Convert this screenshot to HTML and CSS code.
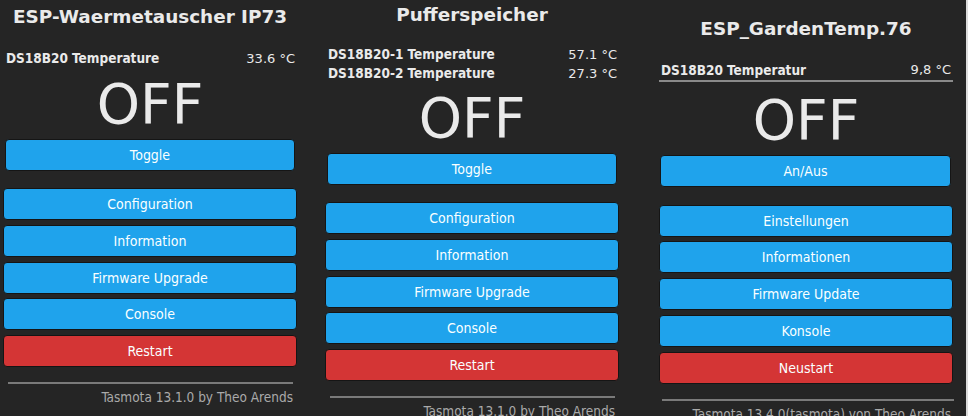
FILE: index.html
```html
<!DOCTYPE html>
<html lang="de">
<head>
<meta charset="utf-8">
<title>Tasmota</title>
<link rel="stylesheet" href="styles.css">
</head>
<body>
<div class="screens">
  <section class="panel p1">
    <h2 class="title">ESP-Waermetauscher IP73</h2>
    <div class="sensors">
      <div class="row"><span class="lbl">DS18B20 Temperature</span><span class="val">33.6 °C</span></div>
    </div>
    <div class="state">OFF</div>
    <div class="btn toggle">Toggle</div>
    <div class="menu">
      <div class="btn">Configuration</div>
      <div class="btn">Information</div>
      <div class="btn">Firmware Upgrade</div>
      <div class="btn">Console</div>
      <div class="btn red">Restart</div>
    </div>
    <div class="rule"></div>
    <div class="foot">Tasmota 13.1.0 by Theo Arends</div>
  </section>
  <section class="panel p2">
    <h2 class="title">Pufferspeicher</h2>
    <div class="sensors">
      <div class="row"><span class="lbl">DS18B20-1 Temperature</span><span class="val">57.1 °C</span></div>
      <div class="row"><span class="lbl">DS18B20-2 Temperature</span><span class="val">27.3 °C</span></div>
    </div>
    <div class="state">OFF</div>
    <div class="btn toggle">Toggle</div>
    <div class="menu">
      <div class="btn">Configuration</div>
      <div class="btn">Information</div>
      <div class="btn">Firmware Upgrade</div>
      <div class="btn">Console</div>
      <div class="btn red">Restart</div>
    </div>
    <div class="rule"></div>
    <div class="foot">Tasmota 13.1.0 by Theo Arends</div>
  </section>
  <section class="panel p3">
    <h2 class="title">ESP_GardenTemp.76</h2>
    <div class="sensors lined">
      <div class="row"><span class="lbl">DS18B20 Temperatur</span><span class="val">9,8 °C</span></div>
    </div>
    <div class="state">OFF</div>
    <div class="btn toggle">An/Aus</div>
    <div class="menu">
      <div class="btn">Einstellungen</div>
      <div class="btn">Informationen</div>
      <div class="btn">Firmware Update</div>
      <div class="btn">Konsole</div>
      <div class="btn red">Neustart</div>
    </div>
    <div class="rule"></div>
    <div class="foot">Tasmota 13.4.0(tasmota) von Theo Arends</div>
  </section>
  <div class="edge"></div>
</div>
</body>
</html>
```
FILE: styles.css
```css
html, body {
  margin: 0;
  padding: 0;
  background: #252525;
  overflow: hidden;
}
body {
  width: 968px;
  height: 416px;
  font-family: "DejaVu Sans", Verdana, sans-serif;
  color: #eaeaea;
}
.screens {
  display: flex;
  height: 416px;
}
.panel {
  display: flex;
  flex-direction: column;
  box-sizing: border-box;
  height: 416px;
  overflow: hidden;
}
.p1 { width: 320px; padding: 5px 0 0 3px; }
.p2 { width: 330px; padding: 3px 0 0 5px; }
.p3 { width: 316px; padding: 17px 0 0 9px; }
.edge { width: 2px; background: #dcdcdc; }

.panel > * { width: 294px; flex: none; }

.title {
  margin: 0;
  font-size: 18.4px;
  font-weight: bold;
  line-height: 24px;
  text-align: center;
  color: #eaeaea;
}
.sensors {
  box-sizing: border-box;
  padding: 0 2px 0 3px;
  margin-top: 20px;
}
.p2 .sensors { margin-top: 18px; }
.p3 .sensors { margin-top: 19px; padding: 0 2px 0 2px; }
.sensors.lined { border-bottom: 2px solid #8a8a8a; }
.row {
  display: flex;
  justify-content: space-between;
  font-size: 13px;
  line-height: 19px;
}
.p3 .row { line-height: 20px; }
.lbl {
  font-family: "DejaVu Sans Condensed", "DejaVu Sans", sans-serif;
  font-stretch: condensed;
  font-weight: bold;
  font-size: 13.5px;
}
.val { font-size: 13px; }

.state {
  font-size: 55px;
  line-height: 60px;
  text-align: center;
  margin-top: 5.5px;
}
.p2 .state { margin-top: 4.5px; }
.p3 .state { margin-top: 7.5px; }

.btn {
  box-sizing: border-box;
  height: 32px;
  border: 1px solid #151515;
  border-radius: 4px;
  background: #1fa3ec;
  color: #faffff;
  font-family: "DejaVu Sans Condensed", "DejaVu Sans", sans-serif;
  font-stretch: condensed;
  font-size: 14px;
  display: flex;
  align-items: center;
  justify-content: center;
}
.btn.red { background: #d43535; }
.btn.toggle {
  margin: 5.5px 2px 0 2px;
  width: 290px;
}
.p3 .btn.toggle { margin: 5px 2px 0 1px; width: 291px; }
.menu {
  display: flex;
  flex-direction: column;
  gap: 4.75px;
  margin-top: 17px;
}
.p3 .menu { margin-top: 18px; }
.rule {
  box-sizing: border-box;
  width: 285px;
  margin: 15px 0 0 5px;
  height: 2px;
  background: #7a7a7a;
}
.p3 .rule { width: 292px; margin-left: 3px; }
.foot {
  box-sizing: border-box;
  padding-right: 4px;
  margin-top: 4px;
  text-align: right;
  font-family: "DejaVu Sans Condensed", "DejaVu Sans", sans-serif;
  font-stretch: condensed;
  font-size: 13.5px;
  line-height: 18px;
  color: #aaaaaa;
}
.p3 .foot { padding-right: 2px; }
```
